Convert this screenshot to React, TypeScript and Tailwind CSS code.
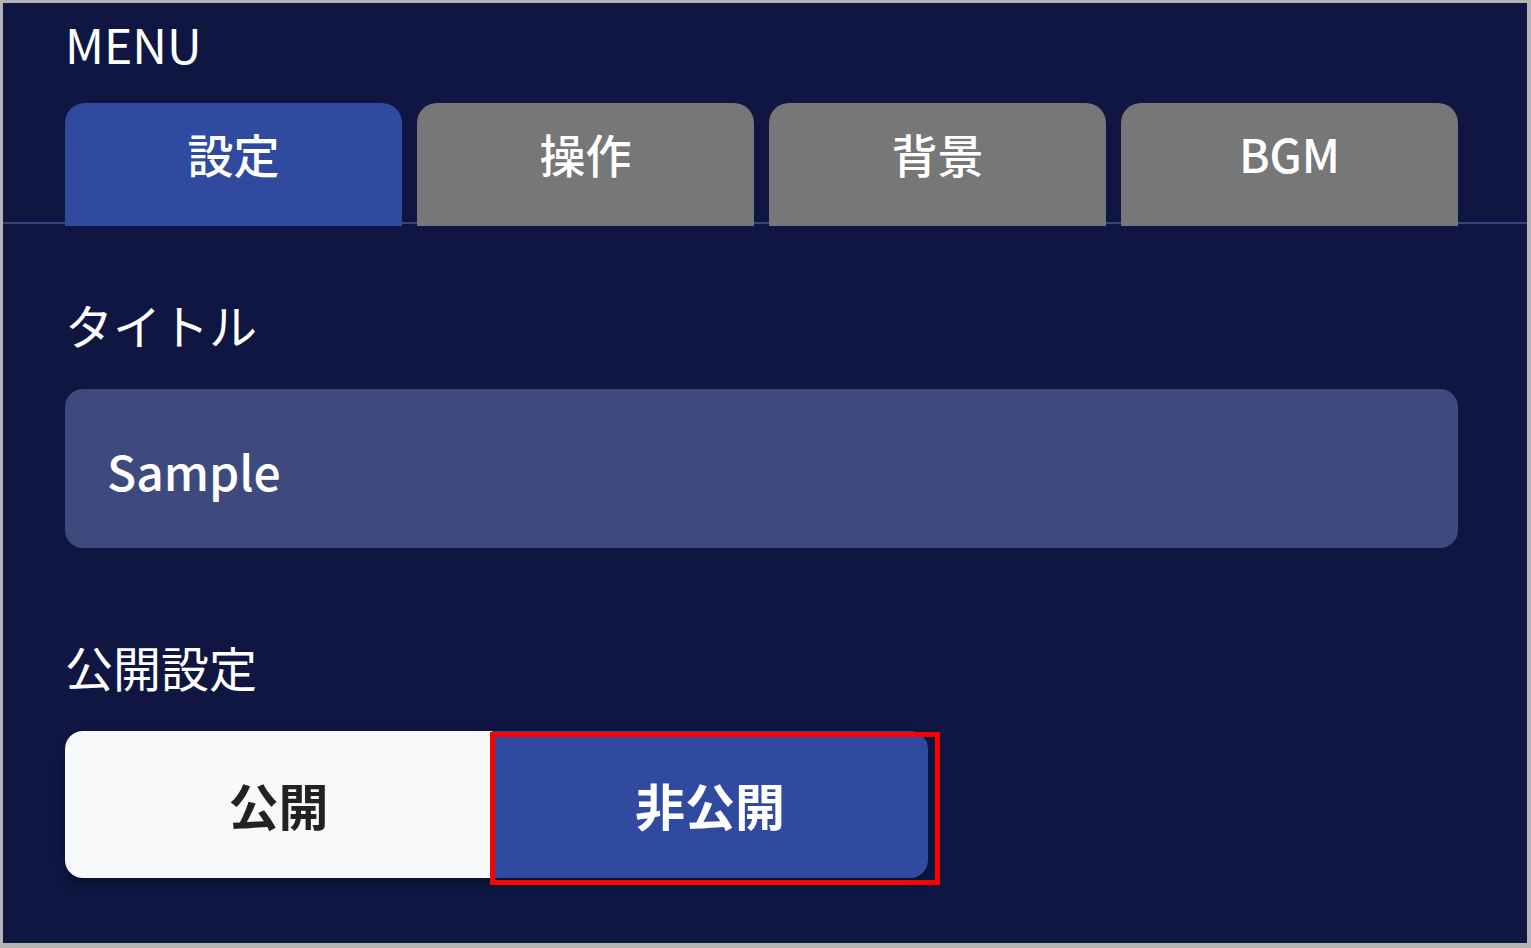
import { useState } from "react";

const tabs = ["設定", "操作", "背景", "BGM"];

function App() {
  const [activeTab, setActiveTab] = useState("設定");
  const [isPublic, setIsPublic] = useState(false);

  return (
    <div
      className="h-[948px] w-[1531px] overflow-hidden border-t-[3px] border-l-[3px] border-r-[4px] border-b-[5px] border-[#b4b4b4] bg-[#0e1641] text-white"
      style={{ fontFamily: '"Noto Sans CJK JP", "Noto Sans", sans-serif' }}
    >
      <div className="px-[62px] pt-[10px] text-[48px] leading-[60px]">MENU</div>

      <div className="mt-[30px] border-b-2 border-[#35447f]">
        <div className="-mb-[4px] grid grid-cols-4 gap-[15px] px-[62px] pr-[69px]">
          {tabs.map((tab) => (
            <button
              key={tab}
              onClick={() => setActiveTab(tab)}
              className={
                "h-[123px] rounded-t-[20px] pb-[22px] text-[46px] font-medium text-white " +
                (activeTab === tab ? "bg-[#2f4a9e]" : "bg-[#777777]")
              }
            >
              {tab}
            </button>
          ))}
        </div>
      </div>

      <div className="px-[62px] pr-[69px]">
        <div className="mt-[72px] text-[48px] leading-[56px]">タイトル</div>
        <div className="mt-[37px] flex h-[159px] items-center rounded-[18px] bg-[#3e4a7e] px-[42px] pt-[2px] text-[48px] font-medium">
          Sample
        </div>

        <div className="mt-[90px] text-[48px] leading-[56px]">公開設定</div>
        <div className="mt-[37px] flex w-[863px] rounded-[18px] shadow-[0_6px_10px_rgba(0,0,0,0.25)]">
          <button
            onClick={() => setIsPublic(true)}
            className={
              "h-[147px] w-[427px] rounded-l-[18px] text-[50px] font-bold " +
              (isPublic ? "bg-[#2f4a9e] text-white" : "bg-[#f8f9fb] text-[#222222]")
            }
          >
            公開
          </button>
          <div className="relative flex-1">
            <button
              onClick={() => setIsPublic(false)}
              className={
                "h-[147px] w-full rounded-r-[18px] text-[50px] font-bold " +
                (isPublic ? "bg-[#f8f9fb] text-[#222222]" : "bg-[#2f4a9e] text-white")
              }
            >
              非公開
            </button>
            <div className="pointer-events-none absolute -left-[2px] top-[1px] h-[153px] w-[450px] border-[5px] border-[#ff0000]" />
          </div>
        </div>
      </div>
    </div>
  );
}

export default App;
